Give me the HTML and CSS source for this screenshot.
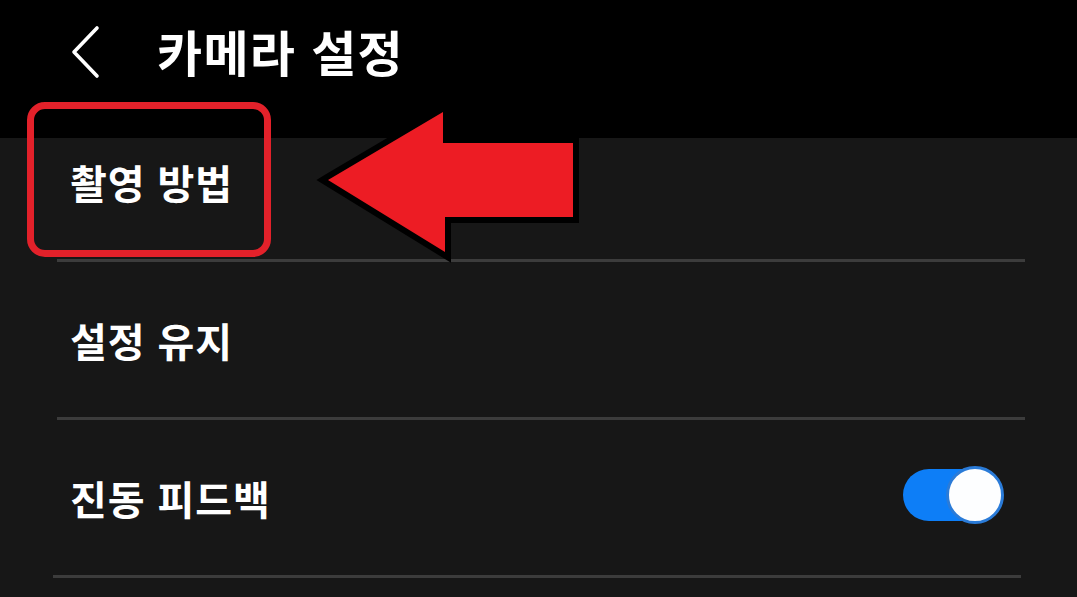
FILE: index.html
```html
<!DOCTYPE html>
<html lang="ko">
<head>
<meta charset="utf-8">
<title>카메라 설정</title>
<link rel="stylesheet" href="styles.css">
</head>
<body>
<div class="screen">
  <header class="header">
    <svg class="back" viewBox="0 0 32 54" width="32" height="54" aria-hidden="true">
      <polyline points="27,3 4,27 27,51" fill="none" stroke="#fff" stroke-width="3.6" stroke-linecap="round" stroke-linejoin="round"/>
    </svg>
    <h1 class="title">카메라 설정</h1>
  </header>
  <main class="card">
    <div class="row">
      <span class="label">촬영 방법</span>
      <span class="highlight"></span>
    </div>
    <div class="row">
      <span class="label">설정 유지</span>
    </div>
    <div class="row row-toggle">
      <span class="label">진동 피드백</span>
      <span class="toggle"><span class="track"></span><span class="thumb"></span></span>
    </div>
  </main>
  <svg class="arrow" viewBox="0 0 290 170" width="290" height="170" aria-hidden="true">
    <polygon points="28,80 143,12 143,43 273,43 273,117 145,117 145,152" fill="#ed1c24" stroke="#000" stroke-width="12" stroke-linejoin="miter" stroke-miterlimit="10" paint-order="stroke"/>
  </svg>
</div>
</body>
</html>
```
FILE: styles.css
```css
* { box-sizing: border-box; }
html, body {
  margin: 0;
  padding: 0;
  background: #000;
}
body {
  width: 1077px;
  height: 597px;
  overflow: hidden;
  font-family: "Noto Sans CJK KR", "Noto Sans", sans-serif;
  color: #fff;
}
.screen {
  position: relative;
  width: 1077px;
  height: 597px;
}
.header {
  height: 104px;
  display: flex;
  align-items: center;
  padding-left: 70px;
}
.back {
  display: block;
  flex: none;
}
.title {
  margin: 0 0 0 55px;
  font-size: 49px;
  font-weight: 700;
  letter-spacing: 1.3px;
  line-height: 1;
  position: relative;
  top: -2px;
}
.card {
  display: block;
  height: 493px;
  background: linear-gradient(to bottom, #000 0, #000 34px, #171717 34px, #171717 100%);
}
.row {
  position: relative;
  margin: 0 52px 0 57px;
  height: 158px;
  border-bottom: 3px solid #3c3c3c;
  display: flex;
  align-items: center;
  justify-content: space-between;
  padding: 0 21px 0 13px;
}
.row:last-child {
  margin: 0 56px 0 53px;
  padding: 0 17px 0 17px;
}
.label {
  font-size: 40px;
  font-weight: 700;
  line-height: 1;
  letter-spacing: 0.9px;
}
.highlight {
  position: absolute;
  left: -30px;
  top: -2px;
  width: 244px;
  height: 155px;
  border: 7px solid #e3212a;
  border-radius: 18px;
}
.toggle {
  position: relative;
  width: 101px;
  height: 58px;
  flex: none;
  top: -3px;
}
.track {
  position: absolute;
  left: 0;
  top: 3px;
  width: 92px;
  height: 52px;
  border-radius: 26px;
  background: #0d7ef7;
}
.thumb {
  position: absolute;
  right: 0;
  top: 0;
  width: 58px;
  height: 58px;
  border-radius: 50%;
  background: #fdfeff;
  border: 3px solid #2a7bd8;
}
.arrow {
  position: absolute;
  left: 300px;
  top: 100px;
}
```
